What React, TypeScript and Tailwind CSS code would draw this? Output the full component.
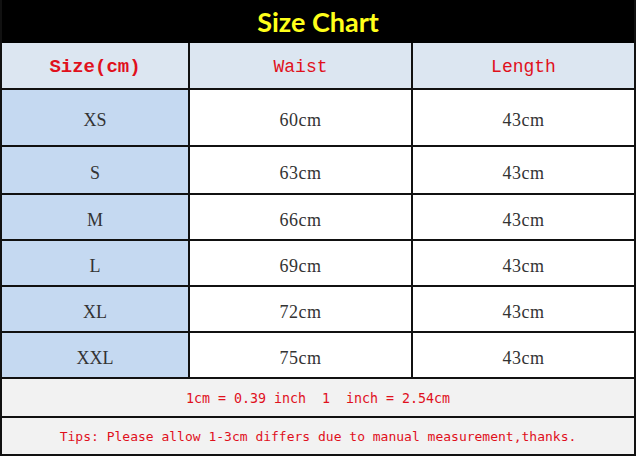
import React from 'react';

const rows = [
  { size: 'XS', waist: '60cm', length: '43cm', h: 'h-[57px]' },
  { size: 'S', waist: '63cm', length: '43cm', h: 'h-[48px]' },
  { size: 'M', waist: '66cm', length: '43cm', h: 'h-[46px]' },
  { size: 'L', waist: '69cm', length: '43cm', h: 'h-[46px]' },
  { size: 'XL', waist: '72cm', length: '43cm', h: 'h-[46px]' },
  { size: 'XXL', waist: '75cm', length: '43cm', h: 'h-[46px]' },
];

const serif = "font-['Liberation_Serif',serif]";
const mono = "font-['Liberation_Mono',monospace]";
const sansMono = "font-['DejaVu_Sans_Mono',monospace]";

const App: React.FC = () => {
  return (
    <div className="w-[636px] h-[456px] bg-white">
      <div className="w-[636px] border-x-2 border-b-2 border-[#111]">
        {/* Title bar */}
        <div className="h-[43px] bg-black flex items-center justify-center">
          <span className="font-['Lato',sans-serif] font-bold text-[27px] text-[#ffff1a] leading-none">
            Size Chart
          </span>
        </div>

        {/* Header row */}
        <div className="grid grid-cols-[188px_223px_1fr] h-[47px] border-b-2 border-[#111] bg-[#dce6f1]">
          <div className={`flex items-center justify-center pt-1 border-r-2 border-[#111] ${mono} font-bold text-[19px] text-[#e0101c]`}>
            Size(cm)
          </div>
          <div className={`flex items-center justify-center pt-1 border-r-2 border-[#111] ${mono} text-[18px] text-[#e0101c]`}>
            Waist
          </div>
          <div className={`flex items-center justify-center pt-1 ${mono} text-[18px] text-[#e0101c]`}>
            Length
          </div>
        </div>

        {/* Data rows */}
        {rows.map((r) => (
          <div key={r.size} className={`grid grid-cols-[188px_223px_1fr] ${r.h} border-b-2 border-[#111]`}>
            <div className={`flex items-center justify-center pt-1.5 border-r-2 border-[#111] bg-[#c5d9f1] ${serif} text-[18px] text-[#333]`}>
              {r.size}
            </div>
            <div className={`flex items-center justify-center pt-1.5 border-r-2 border-[#111] ${serif} text-[18px] tracking-[0.5px] text-[#333]`}>
              {r.waist}
            </div>
            <div className={`flex items-center justify-center pt-1.5 ${serif} text-[18px] tracking-[0.5px] text-[#333]`}>
              {r.length}
            </div>
          </div>
        ))}

        {/* Conversion */}
        <div className={`h-[39px] border-b-2 border-[#111] bg-[#f2f2f2] flex items-center justify-center pt-0.5 ${sansMono} text-[13.3px] text-[#e0101c] whitespace-pre`}>
          1cm = 0.39 inch  1  inch = 2.54cm
        </div>

        {/* Tips */}
        <div className={`h-[36px] bg-[#f2f2f2] flex items-center justify-center pt-0.5 ${sansMono} text-[13px] text-[#e0101c] whitespace-pre`}>
          Tips: Please allow 1-3cm differs due to manual measurement,thanks.
        </div>
      </div>
    </div>
  );
};

export default App;
